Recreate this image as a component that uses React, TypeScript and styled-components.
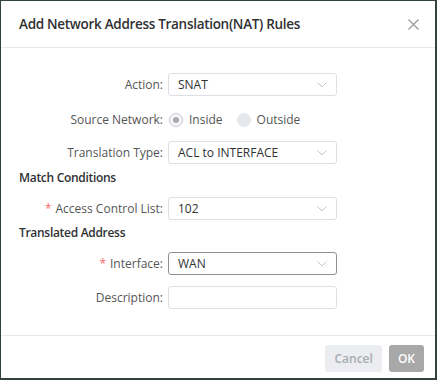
import React from 'react';
import styled, { createGlobalStyle } from 'styled-components';

const GlobalStyle = createGlobalStyle`
  html, body {
    margin: 0;
    padding: 0;
    background: #34423f;
  }
  body {
    font-family: "Open Sans", "Noto Sans", Arial, sans-serif;
    -webkit-font-smoothing: antialiased;
  }
`;

const Backdrop = styled.div`
  width: 437px;
  height: 380px;
  box-sizing: border-box;
  padding: 1px 2px 2px 1px;
  background: #34423f;
`;

const Dialog = styled.div`
  height: 100%;
  background: #fff;
  display: flex;
  flex-direction: column;
`;

const Header = styled.div`
  height: 47px;
  box-sizing: border-box;
  padding: 0 16px 0 18px;
  display: flex;
  align-items: center;
  justify-content: space-between;
  border-bottom: 1px solid #e8e8e8;
`;

const Title = styled.h2`
  margin: 0;
  font-size: 13.5px;
  font-weight: 600;
  color: #303133;
  letter-spacing: -0.3px;
`;

const CloseButton = styled.button`
  border: 0;
  background: none;
  padding: 0;
  width: 11px;
  height: 11px;
  cursor: pointer;
  display: flex;
`;

const Body = styled.div`
  flex: 1;
  padding: 25px 18px 0;
  display: flex;
  flex-direction: column;
`;

const Row = styled.div<{ $gap?: number }>`
  display: flex;
  align-items: center;
  height: 23px;
  margin-bottom: ${(p) => p.$gap ?? 11}px;
`;

const Label = styled.label`
  width: 149px;
  flex: none;
  box-sizing: border-box;
  padding-right: 5px;
  text-align: right;
  font-size: 12px;
  color: #555;
  white-space: nowrap;
`;

const Required = styled.span`
  color: #f56c6c;
  margin-right: 4px;
`;

const Section = styled.div<{ $gap?: number }>`
  font-size: 12px;
  font-weight: 600;
  color: #303133;
  letter-spacing: -0.3px;
  height: 18px;
  line-height: 18px;
  margin: 0 0 ${(p) => p.$gap ?? 10}px;
`;

const Select = styled.div<{ $active?: boolean }>`
  width: 169px;
  height: 23px;
  box-sizing: border-box;
  border: 1px solid ${(p) => (p.$active ? '#8e9096' : '#dcdfe6')};
  border-radius: 3px;
  padding: 0 9px 0 9px;
  display: flex;
  align-items: center;
  justify-content: space-between;
  font-size: 12px;
  color: #303133;
  background: #fff;
`;

const Input = styled.input`
  width: 169px;
  height: 23px;
  box-sizing: border-box;
  border: 1px solid #dcdfe6;
  border-radius: 3px;
  padding: 0 9px;
  font: inherit;
  font-size: 12px;
  outline: none;
`;

const RadioGroup = styled.div`
  display: flex;
  align-items: center;
  padding-left: 1px;
`;

const RadioItem = styled.span`
  display: flex;
  align-items: center;
  margin-right: 14px;
  font-size: 12px;
  color: #555;
`;

const RadioCircle = styled.span<{ $checked?: boolean }>`
  width: 14px;
  height: 14px;
  box-sizing: border-box;
  border-radius: 50%;
  margin-right: 6px;
  border: 1px solid ${(p) => (p.$checked ? '#c6c8cc' : '#e4e6ec')};
  background: ${(p) => (p.$checked ? '#f5f6f8' : '#e6e8ee')};
  display: flex;
  align-items: center;
  justify-content: center;
  &::after {
    content: '';
    width: 6px;
    height: 6px;
    border-radius: 50%;
    background: ${(p) => (p.$checked ? '#a9abb0' : 'transparent')};
  }
`;

const Footer = styled.div`
  height: 43px;
  box-sizing: border-box;
  border-top: 1px solid #e8e8e8;
  padding: 9px 11px 0 0;
  display: flex;
  justify-content: flex-end;
  gap: 7px;
`;

const Button = styled.button<{ $primary?: boolean }>`
  height: 27px;
  padding: 0 ${(p) => (p.$primary ? 9 : 9)}px;
  border: 0;
  border-radius: 3px;
  font-family: inherit;
  font-size: 12px;
  font-weight: 600;
  background: ${(p) => (p.$primary ? '#a8a8a8' : '#ebedf0')};
  color: ${(p) => (p.$primary ? '#fff' : '#a9acb2')};
  cursor: not-allowed;
`;

const Chevron = () => (
  <svg width="10" height="6" viewBox="0 0 10 6" fill="none">
    <path d="M0.5 0.5 L5 5 L9.5 0.5" stroke="#c0c4cc" strokeWidth="1" />
  </svg>
);

const CloseIcon = () => (
  <svg width="11" height="11" viewBox="0 0 11 11">
    <path d="M0.5 0.5 L10.5 10.5 M10.5 0.5 L0.5 10.5" stroke="#9a9a9a" strokeWidth="1.3" />
  </svg>
);

const SelectField = ({ value, active }: { value: string; active?: boolean }) => (
  <Select $active={active}>
    <span>{value}</span>
    <Chevron />
  </Select>
);

export default function App() {
  return (
    <>
      <GlobalStyle />
      <Backdrop>
        <Dialog>
          <Header>
            <Title>Add Network Address Translation(NAT) Rules</Title>
            <CloseButton aria-label="close">
              <CloseIcon />
            </CloseButton>
          </Header>
          <Body>
            <Row $gap={12}>
              <Label>Action:</Label>
              <SelectField value="SNAT" />
            </Row>
            <Row $gap={10}>
              <Label>Source Network:</Label>
              <RadioGroup>
                <RadioItem>
                  <RadioCircle $checked />
                  Inside
                </RadioItem>
                <RadioItem>
                  <RadioCircle />
                  Outside
                </RadioItem>
              </RadioGroup>
            </Row>
            <Row $gap={5}>
              <Label>Translation Type:</Label>
              <SelectField value="ACL to INTERFACE" />
            </Row>
            <Section>Match Conditions</Section>
            <Row $gap={4}>
              <Label>
                <Required>*</Required>Access Control List:
              </Label>
              <SelectField value="102" />
            </Row>
            <Section>Translated Address</Section>
            <Row $gap={11}>
              <Label>
                <Required>*</Required>Interface:
              </Label>
              <SelectField value="WAN" active />
            </Row>
            <Row $gap={0}>
              <Label>Description:</Label>
              <Input />
            </Row>
          </Body>
          <Footer>
            <Button>Cancel</Button>
            <Button $primary>OK</Button>
          </Footer>
        </Dialog>
      </Backdrop>
    </>
  );
}
